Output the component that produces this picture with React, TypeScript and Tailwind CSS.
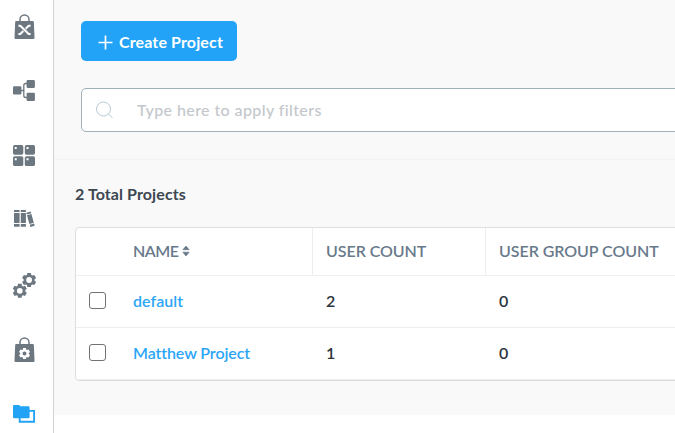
import type { ReactNode } from "react";

function gearPath(cx: number, cy: number, outer: number, root: number, hole: number) {
  const teeth = 6;
  const points: string[] = [];
  for (let i = 0; i < teeth; i++) {
    const mid = (i * 2 * Math.PI) / teeth - Math.PI / 2;
    const corners: [number, number][] = [
      [-0.4, root],
      [-0.25, outer],
      [0.25, outer],
      [0.4, root],
    ];
    for (const [offset, r] of corners) {
      points.push(`${(cx + r * Math.cos(mid + offset)).toFixed(2)} ${(cy + r * Math.sin(mid + offset)).toFixed(2)}`);
    }
  }
  return `M${points.join("L")}ZM${cx - hole} ${cy}a${hole} ${hole} 0 1 0 ${hole * 2} 0a${hole} ${hole} 0 1 0 ${-hole * 2} 0Z`;
}

function Icon({ children }: { children: ReactNode }) {
  return (
    <svg width="28" height="28" viewBox="0 0 28 28" fill="currentColor" className="block shrink-0">
      {children}
    </svg>
  );
}

function Bag({ children }: { children: ReactNode }) {
  return (
    <Icon>
      <path d="M10 9V6.4a4.5 4.5 0 0 1 9 0V9" fill="none" stroke="currentColor" strokeWidth="1.5" />
      <path d="M6.2 8h16.6q1 0 1.05 1l.7 15.8q0 1.2-1.2 1.2H5.6q-1.2 0-1.1-1.2L5.2 9q0-1 1-1Z" />
      {children}
    </Icon>
  );
}

function Sidebar() {
  return (
    <nav className="flex h-full w-[54px] shrink-0 flex-col items-start border-r border-[#d0d2d4] bg-white pt-[13px] pl-[10px] text-[#6c7780]">
      <Bag>
        <path d="M8.4 12.8h1.9l8.4 8.2h1.9M20.6 12.8h-1.9l-3 3M13.3 18l-3 3H8.4" fill="none" stroke="white" strokeWidth="2" strokeLinejoin="round" />
      </Bag>
      <div className="mt-[36px]">
        <Icon>
          <path d="M10 13.5h4M20 6.5h-4.2q-2 0-2 2v10q0 2 2 2H20" fill="none" stroke="currentColor" strokeWidth="1.3" />
          <rect x="3" y="9.3" width="8.4" height="8.2" rx="1.2" />
          <rect x="16.6" y="3" width="8.3" height="8" rx="1.2" />
          <rect x="16.6" y="15.8" width="8.3" height="8.1" rx="1.2" />
        </Icon>
      </div>
      <div className="mt-[37px]">
        <Icon>
          <rect x="3" y="3" width="10.3" height="9.8" rx="1.7" />
          <rect x="14.8" y="3" width="10.2" height="9.8" rx="1.7" />
          <rect x="3" y="14.3" width="10.3" height="9.8" rx="1.7" />
          <rect x="14.8" y="14.3" width="10.2" height="9.8" rx="1.7" />
          <path d="M4.7 5h2v2h-2zM16.5 5h2v2h-2zM4.7 16.3h2v2h-2zM16.5 16.3h2v2h-2z" fill="white" />
        </Icon>
      </div>
      <div className="mt-[35px]">
        <Icon>
          <path d="M4 5h5.6v2H4zM4 8h5.6v10.1H4zM4 19.1h5.6v2.7H4zM10.8 5h5.1v2h-5.1zM10.8 8h5.1v10.1h-5.1zM10.8 19.1h5.1v2.7h-5.1z" />
          <path d="m16.3 7.7 4.4-1.2.5 1.7-4.4 1.2zM17 10.2l4.4-1.2 2.4 8.7-4.4 1.2zM19.7 19.8l4.4-1.2.6 2.1-4.4 1.2z" />
        </Icon>
      </div>
      <div className="mt-[39px]">
        <Icon>
          <path fillRule="evenodd" d={gearPath(19.1, 8, 7.3, 5.5, 2.9)} />
          <path fillRule="evenodd" d={gearPath(9.8, 18.8, 7.3, 5.5, 2.9)} />
        </Icon>
      </div>
      <div className="mt-[36px]">
        <Bag>
          <path fill="white" fillRule="evenodd" d={gearPath(14.5, 17.5, 5.7, 4.3, 2)} />
        </Bag>
      </div>
      <div className="mt-[38px] text-[#22a3f5]">
        <Icon>
          <path d="M9.7 8.9h14.4v10.9H9.7z" fill="white" stroke="currentColor" strokeWidth="1.9" />
          <path d="M3 4.2Q3 3 4.2 3H9l1.4 1.2h8q1.2 0 1.2 1.2v9.7q0 1.2-1.2 1.2H4.2Q3 16.3 3 15.1Z" />
        </Icon>
      </div>
    </nav>
  );
}

function Checkbox({ label }: { label: string }) {
  return <input type="checkbox" aria-label={label} className="block size-[17px] appearance-none rounded-[3px] border border-[#727272] bg-white" />;
}

const projects = [
  { name: "default", users: 2, groups: 0, spacing: "tracking-[0.05px]" },
  { name: "Matthew Project", users: 1, groups: 0, spacing: "tracking-[-0.1px]" },
];

export default function App() {
  return (
    <div className="flex h-[433px] w-[675px] overflow-hidden bg-white font-['Lato','Open_Sans',sans-serif] text-base leading-6">
      <Sidebar />
      <main className="h-[415px] min-w-0 flex-1 overflow-hidden bg-[#f9f9f9]">
        <section className="h-[160px] border-b border-[#f3f3f3] pt-[21px] pl-[27px]">
          <button className="flex h-10 w-[156px] items-center rounded-[5px] bg-[#22a3f7] pt-[2px] pl-[17px] font-bold text-white">
            <svg width="15" height="15" viewBox="0 0 15 15" className="mt-px mr-[6px] shrink-0" stroke="currentColor" strokeWidth="1.7">
              <path d="M7.5 .5v14M.5 7.5h14" />
            </svg>
            <span className="whitespace-nowrap tracking-[0.13px]">Create Project</span>
          </button>
          <div className="mt-[27px] flex h-11 w-[620px] items-center rounded-[5px] border border-[#a0b1ba] bg-white pl-[13px]">
            <svg width="19" height="18" viewBox="0 0 19 18" fill="none" stroke="#b9cad5" className="mr-[23px] shrink-0">
              <circle cx="8.5" cy="8" r="7" />
              <path d="m13.5 13 4 4" />
            </svg>
            <span className="font-medium tracking-[0.4px] text-[#c3c7cb]">Type here to apply filters</span>
          </div>
        </section>
        <section className="pt-[22px] pl-[21px]">
          <h2 className="font-bold tracking-[0.1px] text-[#3c4751]">2 Total Projects</h2>
          <div className="mt-[21px] w-[640px] overflow-hidden rounded border border-[#dedede] bg-white">
            <div className="grid h-12 grid-cols-[236px_173px_1fr] border-b border-[#f0f0f0] font-semibold text-[#68798b]">
              <div className="flex items-center pb-0.5 pl-[57px] tracking-[-0.5px]">
                NAME
                <svg width="8" height="10" viewBox="0 0 8 10" fill="currentColor" className="ml-1">
                  <path d="m4 0 3.2 3.7H.8ZM4 10 .8 6.2h6.4Z" stroke="currentColor" strokeWidth=".6" strokeLinejoin="round" />
                </svg>
              </div>
              <div className="flex items-center border-l border-[#eeeeee] pb-0.5 pl-[13px] tracking-[-0.05px]">USER COUNT</div>
              <div className="flex items-center border-l border-[#eeeeee] pb-0.5 pl-[13px] tracking-[-0.05px]">USER GROUP COUNT</div>
            </div>
            {projects.map((project) => (
              <div key={project.name} className="grid h-[52px] grid-cols-[57px_179px_173px_1fr] items-center border-b border-[#eeeeee] pb-0.5 font-semibold text-[#2d343c]">
                <div className="pl-[13px]"><Checkbox label={project.name} /></div>
                <a href="#" className={`text-[#2ba5f6] ${project.spacing}`}>{project.name}</a>
                <span className="pl-[14px]">{project.users}</span>
                <span className="pl-[14px]">{project.groups}</span>
              </div>
            ))}
          </div>
        </section>
      </main>
    </div>
  );
}
